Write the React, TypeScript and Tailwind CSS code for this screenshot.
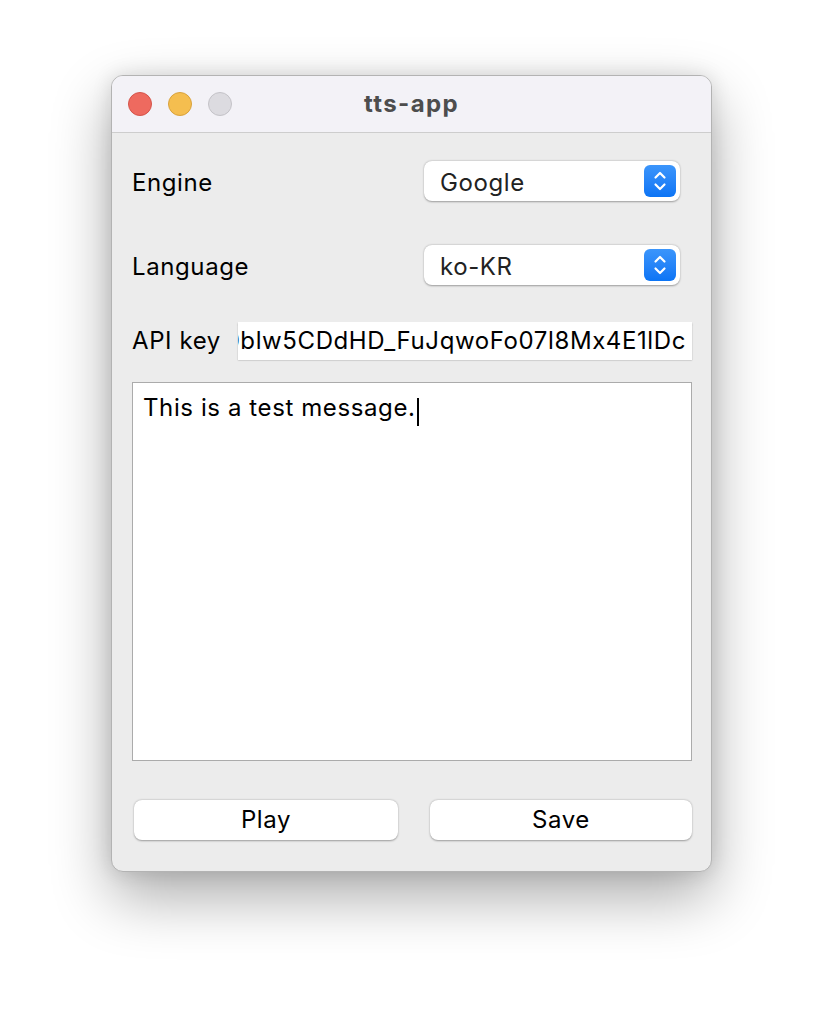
import React from "react";

function Stepper() {
  return (
    <div className="w-[32px] h-[32px] rounded-[6px] bg-gradient-to-b from-[#3b95fb] to-[#0a74f5] flex items-center justify-center">
      <svg width="14" height="22" viewBox="0 0 14 22" fill="none" stroke="white" strokeWidth="2.2" strokeLinecap="round" strokeLinejoin="round">
        <path d="M2.5 7.5 L7 3 L11.5 7.5" />
        <path d="M2.5 14.5 L7 19 L11.5 14.5" />
      </svg>
    </div>
  );
}

function Select({ value }: { value: string }) {
  return (
    <div className="w-[256px] h-[40px] bg-white rounded-[8px] shadow-[0_0.5px_2px_rgba(0,0,0,0.35)] flex items-center justify-between pl-[16px] pr-[4px]">
      <span className="text-[24px] tracking-[0.6px] text-[#222] pt-[3px]">{value}</span>
      <Stepper />
    </div>
  );
}

export default function App() {
  return (
    <div
      className="min-h-[1020px] bg-white pt-[75px] pl-[111px]"
      style={{ fontFamily: "Inter, 'Noto Sans', sans-serif" }}
    >
      <div className="w-[601px] h-[797px] rounded-[12px] border border-[#b3b3b3] bg-[#ececec] overflow-hidden shadow-[0_25px_60px_rgba(0,0,0,0.33),0_0_20px_rgba(0,0,0,0.12)] flex flex-col">
        <div className="h-[57px] bg-[#f3f2f7] border-b border-[#cdcdcd] relative flex items-center justify-center shrink-0">
          <div className="absolute left-[16px] top-[16px] flex gap-[16px]">
            <div className="w-[24px] h-[24px] rounded-full bg-[#ee6a5f] border border-[#d5544a]" />
            <div className="w-[24px] h-[24px] rounded-full bg-[#f5be4f] border border-[#d9a23c]" />
            <div className="w-[24px] h-[24px] rounded-full bg-[#dcdbe0] border border-[#c4c3c8]" />
          </div>
          <span className="text-[24px] tracking-[1.4px] font-bold text-[#4d4d4d]">tts-app</span>
        </div>
        <div className="flex flex-col pl-[20px] pr-[19px] pt-[28px] text-black">
          <div className="flex items-center justify-between h-[40px] pr-[12px]">
            <span className="text-[24px] tracking-[0.6px] pt-[3px]">Engine</span>
            <Select value="Google" />
          </div>
          <div className="flex items-center justify-between h-[40px] pr-[12px] mt-[44px]">
            <span className="text-[24px] tracking-[0.6px] pt-[3px]">Language</span>
            <Select value="ko-KR" />
          </div>
          <div className="flex items-center h-[38px] mt-[37px]">
            <span className="text-[24px] tracking-[0.6px] w-[106px] shrink-0">API key</span>
            <div className="flex-1 min-w-0 h-[38px] bg-white shadow-[0_0.5px_1.5px_rgba(0,0,0,0.3)] overflow-hidden flex items-center justify-end pr-[6px]">
              <span className="text-[24px] tracking-[0.6px] whitespace-nowrap">0blw5CDdHD_FuJqwoFo07l8Mx4E1lDc</span>
            </div>
          </div>
          <div className="mt-[22px] h-[379px] bg-white border border-[#ababab] px-[10px] pt-[10px]">
            <span className="text-[24px] tracking-[0.6px] leading-[30px]">This is a test message.</span>
            <span className="inline-block w-[2px] h-[28px] bg-black align-middle ml-[1px]" />
          </div>
          <div className="mt-[39px] flex gap-[32px] pl-[2px]">
            <button className="w-[264px] h-[40px] bg-white rounded-[8px] shadow-[0_0.5px_2px_rgba(0,0,0,0.35)] text-[24px] tracking-[0.6px] text-black">
              Play
            </button>
            <button className="w-[262px] h-[40px] bg-white rounded-[8px] shadow-[0_0.5px_2px_rgba(0,0,0,0.35)] text-[24px] tracking-[0.6px] text-black">
              Save
            </button>
          </div>
        </div>
      </div>
    </div>
  );
}
